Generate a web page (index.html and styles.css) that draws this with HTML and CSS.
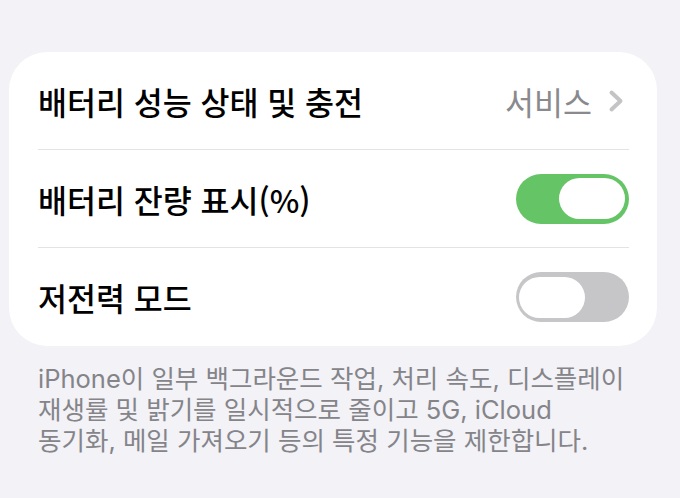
FILE: index.html
```html
<!DOCTYPE html>
<html lang="ko">
<head>
<meta charset="utf-8">
<title>배터리</title>
<link rel="stylesheet" href="styles.css">
</head>
<body>
<div class="page">
  <div class="card">
    <div class="row">
      <span class="label">배터리 성능 상태 및 충전</span>
      <span class="detail">
        <span class="detail-text">서비스</span>
        <svg class="chevron" width="16" height="24" viewBox="0 0 16 24"><path d="M3.5 3.5 L12.5 12 L3.5 20.5" fill="none" stroke="#c4c4c7" stroke-width="4" stroke-linecap="round" stroke-linejoin="round"/></svg>
      </span>
    </div>
    <div class="row">
      <span class="label">배터리 잔량 표시(%)</span>
      <span class="toggle on"><span class="knob"></span></span>
    </div>
    <div class="row">
      <span class="label">저전력 모드</span>
      <span class="toggle off"><span class="knob"></span></span>
    </div>
  </div>
  <p class="footer">iPhone이 일부 백그라운드 작업, 처리 속도, 디스플레이<br>재생률 및 밝기를 일시적으로 줄이고 5G, iCloud<br>동기화, 메일 가져오기 등의 특정 기능을 제한합니다.</p>
</div>
</body>
</html>
```
FILE: styles.css
```css
html, body {
  margin: 0;
  padding: 0;
  background: #f2f2f7;
}
body {
  font-family: "Inter", "Noto Sans CJK KR", sans-serif;
  width: 680px;
  height: 498px;
  overflow: hidden;
}
.page {
  padding: 52px 23px 0 9px;
}
.card {
  background: #ffffff;
  border-radius: 38px;
  padding: 0 28px 0 29px;
}
.row {
  height: 97px;
  display: flex;
  align-items: center;
  justify-content: space-between;
  border-bottom: 1px solid #e3e3e6;
}
.row:last-child {
  height: 98px;
  border-bottom: none;
}
.label {
  font-family: "Noto Sans CJK KR", sans-serif;
  font-size: 31.5px;
  font-weight: 500;
  color: #000;
}
.detail {
  display: flex;
  align-items: center;
  gap: 16px;
  margin-right: 5px;
}
.detail-text {
  font-family: "Noto Sans CJK KR", sans-serif;
  font-size: 31.5px;
  font-weight: 400;
  color: #8a8a8e;
}
.chevron {
  display: block;
}
.toggle {
  box-sizing: border-box;
  width: 113px;
  height: 50px;
  border-radius: 25px;
  display: flex;
  align-items: center;
}
.toggle .knob {
  width: 66px;
  height: 41px;
  border-radius: 21px;
  background: #ffffff;
}
.toggle.on {
  background: #65c466;
  justify-content: flex-end;
  padding: 0 4px;
}
.toggle.off {
  background: #c6c6c9;
  justify-content: flex-start;
  padding: 0 3px;
}
.footer {
  margin: 17px 0 0 29px;
  font-family: "Inter", "Noto Sans CJK KR", sans-serif;
  font-size: 25.5px;
  line-height: 31px;
  color: #848489;
}
```
